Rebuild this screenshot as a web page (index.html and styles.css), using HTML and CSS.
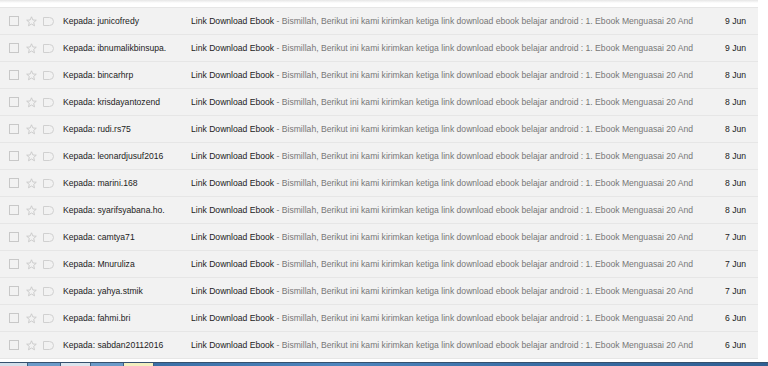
FILE: index.html
```html
<!DOCTYPE html>
<html lang="id">
<head>
  <meta charset="UTF-8">
  <title>Terkirim - Mail</title>
  <link rel="stylesheet" href="styles.css">
</head>
<body>
  <div class="top-shade"></div>
  <div class="mail-list" id="list"></div>
  <div class="taskbar">
    <span class="tb-start"></span>
    <span class="tb-btn blue"></span>
    <span class="tb-btn light"></span>
    <span class="tb-btn blue"></span>
    <span class="tb-btn active"></span>
    <span class="tb-rest"></span>
  </div>

  <script>
    var names = [
      ["junicofredy", "9 Jun"], ["ibnumalikbinsupa.", "9 Jun"], ["bincarhrp", "8 Jun"],
      ["krisdayantozend", "8 Jun"], ["rudi.rs75", "8 Jun"], ["leonardjusuf2016", "8 Jun"],
      ["marini.168", "8 Jun"], ["syarifsyabana.ho.", "8 Jun"], ["camtya71", "7 Jun"],
      ["Mnuruliza", "7 Jun"], ["yahya.stmik", "7 Jun"], ["fahmi.bri", "6 Jun"],
      ["sabdan20112016", "6 Jun"]
    ];
    var icons =
      '<span class="ico"><svg width="10" height="10" viewBox="0 0 10 10"><rect x="0.5" y="0.5" width="9" height="9" fill="none" stroke="#c8c8c8"/></svg></span>' +
      '<span class="ico"><svg width="11" height="11" viewBox="0 0 11 11"><path d="M5.5 0.8 L6.9 4 L10.3 4.2 L7.7 6.4 L8.5 9.8 L5.5 8 L2.5 9.8 L3.3 6.4 L0.7 4.2 L4.1 4 Z" fill="none" stroke="#c8c8c8" stroke-width="0.9" stroke-linejoin="round"/></svg></span>' +
      '<span class="ico"><svg width="11" height="9" viewBox="0 0 11 9"><path d="M0.5 0.5 H6.5 Q10.5 0.5 10.5 4.5 Q10.5 8.5 6.5 8.5 H0.5 Z" fill="none" stroke="#d0d0d0"/></svg></span>';
    var snippet = "Bismillah, Berikut ini kami kirimkan ketiga link download ebook belajar android : 1. Ebook Menguasai 20 And";
    document.getElementById("list").innerHTML = names.map(function (n) {
      return '<div class="row">' +
        '<div class="icons">' + icons + '</div>' +
        '<div class="sender">Kepada: ' + n[0] + '</div>' +
        '<div class="body"><span class="subject">Link Download Ebook</span><span class="snippet"> - ' + snippet + '</span></div>' +
        '<div class="date">' + n[1] + '</div>' +
        '</div>';
    }).join("");
  </script>
</body>
</html>
```

FILE: styles.css
```css
html, body {
  margin: 0;
  padding: 0;
}
body {
  width: 768px;
  height: 366px;
  overflow: hidden;
  background: #ffffff;
  font-family: "Liberation Sans", Arial, sans-serif;
  font-size: 8.6px;
  color: #222;
  display: flex;
  flex-direction: column;
}
.top-shade {
  height: 7px;
  background: linear-gradient(#e6e6e6, #ffffff 3px, #ffffff);
  width: 758px;
}
.mail-list {
  width: 758px;
  border-top: 1px solid #e6e6e6;
}
.row {
  display: flex;
  align-items: center;
  height: 26px;
  background: #f2f2f2;
  border-bottom: 1px solid #e6e6e6;
  white-space: nowrap;
}
.icons {
  display: flex;
  align-items: center;
  gap: 6px;
  width: 54px;
  padding-left: 9px;
}
.ico {
  display: flex;
  width: 11px;
  justify-content: flex-start;
}
.sender {
  width: 128px;
  overflow: hidden;
}
.body {
  width: 504px;
  overflow: hidden;
}
.snippet {
  color: #777;
}
.date {
  flex: 1;
  text-align: right;
  padding-right: 12px;
}
.taskbar {
  margin-top: auto;
  height: 3px;
  display: flex;
  border-top: 1px solid #35506e;
}
.taskbar span {
  border-right: 1px solid #3f5f80;
}
.tb-start { width: 27px; background: #d3dfea; }
.tb-btn { width: 32px; }
.tb-btn.blue { background: #6b9bc9; }
.tb-btn.light { width: 29px; background: #dbe5ee; }
.tb-btn.active { width: 29px; background: #f2efbf; }
.tb-rest { flex: 1; background: linear-gradient(90deg, #3a6fa6, #4f86be 30%, #3a6fa6 60%, #2f5f93); }
```
